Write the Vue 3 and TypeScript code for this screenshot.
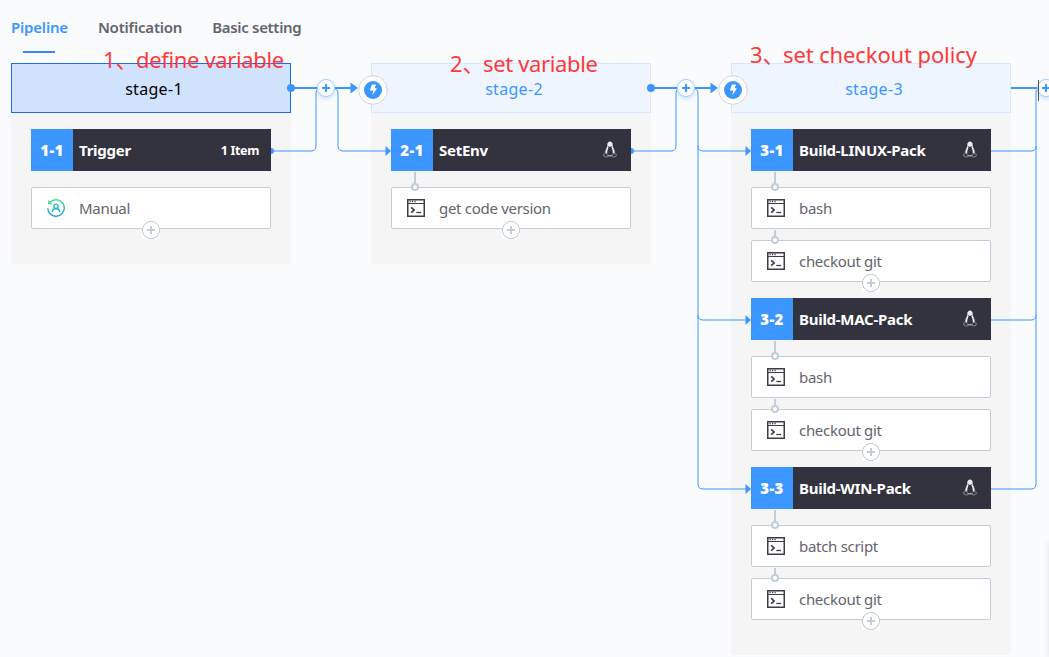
<script setup lang="ts">
interface Atom { name: string; manual?: boolean }
interface Job { id: string; name: string; items?: string; atoms: Atom[] }
interface Stage { name: string; active?: boolean; jobs: Job[] }

const tabs: string[] = ['Pipeline', 'Notification', 'Basic setting']
const stages: Stage[] = [
  { name: 'stage-1', active: true, jobs: [{ id: '1-1', name: 'Trigger', items: '1 Item', atoms: [{ name: 'Manual', manual: true }] }] },
  { name: 'stage-2', jobs: [{ id: '2-1', name: 'SetEnv', atoms: [{ name: 'get code version' }] }] },
  {
    name: 'stage-3',
    jobs: [
      { id: '3-1', name: 'Build-LINUX-Pack', atoms: [{ name: 'bash' }, { name: 'checkout git' }] },
      { id: '3-2', name: 'Build-MAC-Pack', atoms: [{ name: 'bash' }, { name: 'checkout git' }] },
      { id: '3-3', name: 'Build-WIN-Pack', atoms: [{ name: 'batch script' }, { name: 'checkout git' }] },
    ],
  },
]
const notes = [
  { cls: 'n1', num: '1', text: 'define variable' },
  { cls: 'n2', num: '2', text: 'set variable' },
  { cls: 'n3', num: '3', text: 'set checkout policy' },
]
const adders: number[] = [326, 686, 1046]
const arrows: [number, number][] = [[391, 151], [751, 151], [751, 320], [751, 489]]
</script>

<template>
  <main class="page">
    <nav class="tabs">
      <a v-for="(t, i) in tabs" :key="t" class="tab" :class="{ on: i === 0 }"><span>{{ t }}</span></a>
    </nav>
    <div class="stages">
      <section v-for="s in stages" :key="s.name" class="stage">
        <header class="stage-head" :class="{ active: s.active }"><span>{{ s.name }}</span></header>
        <div class="jobs">
          <article v-for="j in s.jobs" :key="j.id" class="job">
            <div class="job-head">
              <b class="job-id">{{ j.id }}</b>
              <span class="job-name">{{ j.name }}</span>
              <span v-if="j.items" class="job-items">{{ j.items }}</span>
              <svg v-else class="tux" viewBox="0 0 14 17">
                <path d="M4.600 5C4.500 2.200 5.200 1 7 1s2.500 1.200 2.400 4c.2 2.300 2.500 4 2.300 7.200M4.600 5C4.400 7.300 2.100 9 2.300 12.200" fill="none" stroke="#b9b9c2" stroke-width=".8" />
                <path d="M4.700 2.500C5 .3 9 .3 9.300 2.500L9.400 4.800 7 6 4.600 4.800z" fill="#ededf1" />
                <path d="M5 5.500C4.400 8 3.200 9 3.500 12.300M9 5.500c.6 2.500 1.900 3.700 1.500 6.800" fill="none" stroke="#f2f2f5" stroke-width="1.400" />
                <path d="M4.800 14.800h4.400" stroke="#d5d5dc" stroke-width="1" />
                <path d="M2.700 12.300L.6 13.200.9 15.200 4 16.200 5.300 15 3.500 12.300zM11.300 12.300l2.100 1-.3 1.900-3.100 1-1.200-1.300 1.700-2.600z" fill="none" stroke="#96969f" stroke-width=".8" />
              </svg>
            </div>
            <div v-for="(a, k) in j.atoms" :key="k" class="atom" :class="{ linked: !a.manual, next: k > 0 }">
              <svg v-if="a.manual" class="ico" viewBox="0 0 18 18" fill="none" stroke="url(#mg)" stroke-width="1.400">
                <defs><linearGradient id="mg" gradientUnits="userSpaceOnUse" x1="9" y1="0" x2="9" y2="18"><stop offset="0" stop-color="#2ee58b" /><stop offset="1" stop-color="#1697f5" /></linearGradient></defs>
                <path d="M3.300 3.100A8.200 8.200 0 1 1 .8 9.200" />
                <path d="M1.200 1v4.300h4.300z" fill="#2edc93" stroke="none" />
                <circle cx="9" cy="7.300" r="2.200" /><path d="M5.300 13c.2-2.300 1.700-3.500 3.700-3.500s3.500 1.200 3.700 3.500" />
              </svg>
              <svg v-else class="ico" viewBox="0 0 18 18" fill="none" stroke="#3d3d45">
                <rect x=".75" y=".75" width="16.500" height="16.500" stroke-width="1.500" />
                <path d="M1 4.500h16" /><path d="M2.500 2.500h1.200M5 2.500h1.200M7.500 2.500h1.200" stroke-width="1.400" />
                <path d="M4.200 8.300l2.900 2.700-2.900 2.700" stroke-width="1.700" /><path d="M9.300 13.500H14" stroke-width="1.300" />
              </svg>
              <span class="atom-name">{{ a.name }}</span>
              <i v-if="k === j.atoms.length - 1" class="add"></i>
            </div>
          </article>
        </div>
      </section>
    </div>

    <svg class="wires" width="1049" height="657" viewBox="0 0 1049 657" fill="none">
      <g stroke="#3c96ff" stroke-width="2"><path d="M291 88H352M651 88H712M1011 88H1040" /></g>
      <g stroke="#3c96ff" stroke-width="1">
        <path d="M271 151H311Q316 151 316 146V93Q316 88 321 88M331 88Q338 88 338 93V146Q338 151 343 151H386" />
        <path d="M631 151H671Q676 151 676 146V93Q676 88 681 88M691 88Q698 88 698 93V484Q698 489 703 489H746M698 146Q698 151 703 151H746M698 315Q698 320 703 320H746" />
        <path d="M991 489H1031Q1036 489 1036 484V93Q1036 88 1041 88M991 151H1031Q1036 151 1036 146M991 320H1031Q1036 320 1036 315" />
      </g>
      <g fill="#3c96ff">
        <circle cx="291" cy="88" r="4" /><circle cx="651" cy="88" r="4" />
        <path d="M350.500 82.500L358 88l-7.500 5.500zM710.500 82.500L718 88l-7.500 5.500z" />
        <path d="M271 148a3 3 0 0 1 0 6zM631 148a3 3 0 0 1 0 6z" />
        <path v-for="(p, i) in arrows" :key="i" :d="`M${p[0] - 5.5} ${p[1] - 5}l5.500 5-5.500 5z`" />
      </g>
      <g v-for="x in adders" :key="x" class="adder">
        <circle :cx="x" cy="88" r="8.500" fill="#fff" stroke="#9fcdff" />
        <path :d="`M${x - 4} 88h8M${x} 84v8`" stroke="#3c96ff" stroke-width="2" />
      </g>
      <g v-for="x in [373, 733]" :key="x">
        <circle :cx="x" cy="90" r="14.300" fill="#fff" stroke="#d2d7e8" />
        <circle :cx="x" cy="90" r="9" fill="#3c96ff" />
        <path :d="`M${x - 1} 84.500h4l-1.300 3.700h2.300l-4.600 7.300.8-5H${x - 3.2}z`" fill="#fff" />
      </g>
      <path d="M1038.500 80v21" stroke="#555" />
    </svg>
    <div v-for="n in notes" :key="n.num" class="note" :class="n.cls"><span class="num">{{ n.num }}、</span><span class="words">{{ n.text }}</span></div>
    <div class="edge"></div>
  </main>
</template>

<style>
body { margin: 0; overflow: hidden; }
</style>
<style scoped>
.page { position: relative; width: 1049px; height: 657px; overflow: hidden; background: #fafbfd; font-family: "Noto Sans", "Open Sans", "Noto Sans CJK SC", sans-serif; color: #63656e; }
.tabs { display: flex; gap: 30px; height: 63px; padding-left: 11px; box-sizing: border-box; }
.tab { position: relative; height: 53px; line-height: 55px; font-size: 15px; font-weight: 600; white-space: nowrap; letter-spacing: -.2px; }
.tab:last-child { letter-spacing: -.32px; }
.tab.on { color: #3c96ff; }
.tab.on::after { content: ""; position: absolute; bottom: 0; left: 12px; width: 32px; height: 2px; background: #3a84ff; }
.stages { display: flex; align-items: flex-start; gap: 80px; padding-left: 11px; }
.stage { flex: 0 0 280px; background: #f5f5f5; border-radius: 2px; padding-bottom: 35px; }
.stage-head { box-sizing: border-box; height: 50px; border: 1px solid #d4e8ff; background: #eff5ff; color: #3c96ff; font-size: 16px; line-height: 50px; text-align: center; padding-left: 6px; letter-spacing: .3px; }
.stage-head.active { border-color: #1a6df3; background: #d1e2fd; color: #000; }
.jobs { display: flex; flex-direction: column; gap: 16px; padding: 16px 20px 0; }
.job-head { display: flex; align-items: center; height: 42px; background: #33333f; color: #fff; font-size: 15px; font-weight: 700; margin-bottom: 16px; }
.job-id { width: 42px; line-height: 42px; background: #3c96ff; text-align: center; letter-spacing: .3px; }
.job-name { flex: 1; padding-left: 6px; white-space: nowrap; letter-spacing: -.27px; }
.job-items { font-size: 12.5px; padding-right: 12px; letter-spacing: -.35px; }
.tux { width: 14px; height: 17px; margin-right: 14px; margin-top: -2px; }
.atom { position: relative; box-sizing: border-box; height: 42px; border: 1px solid #c3cdd7; border-radius: 2px; background: #fff; display: flex; align-items: center; padding-left: 15px; font-size: 15px; letter-spacing: -.3px; }
.atom.next { margin-top: 11px; }
.ico { width: 18px; height: 18px; }
.atom-name { margin-left: 14px; white-space: nowrap; }
.linked::before { content: ""; position: absolute; left: 22px; top: -16px; width: 2px; height: 13px; background: #c3cdd7; }
.linked.next::before { top: -11px; height: 8px; }
.linked::after { content: ""; position: absolute; left: 19px; top: -5px; width: 4px; height: 4px; border: 2px solid #c3cdd7; border-radius: 50%; background: #fff; }
.add { position: absolute; left: 110px; top: 33px; width: 18px; height: 18px; background: radial-gradient(circle at 9px 9px, #fff 7.700px, #c3cdd7 8.200px, #c3cdd7 8.700px, #fff 9.200px); }
.add::before, .add::after { content: ""; position: absolute; background: #c3cdd7; }
.add::before { left: 5px; top: 8px; width: 8px; height: 2px; }
.add::after { left: 8px; top: 5px; width: 2px; height: 8px; }
.wires { position: absolute; left: 0; top: 0; }
.adder { filter: drop-shadow(0 2px 2px rgba(60, 150, 255, .25)); }
.note { position: absolute; display: flex; color: #ff3838; font-size: 22px; line-height: 30px; white-space: nowrap; letter-spacing: -.35px; }
.num { width: 33px; letter-spacing: 0; }
.n1 { left: 103px; top: 44px; }
.n2 { left: 450px; top: 48px; }
.n3 { left: 750px; top: 39px; letter-spacing: -.12px; }
.edge { position: absolute; right: -6px; top: 542px; width: 6px; height: 117px; box-shadow: 0 0 6px rgba(0, 0, 0, .1); }
</style>
